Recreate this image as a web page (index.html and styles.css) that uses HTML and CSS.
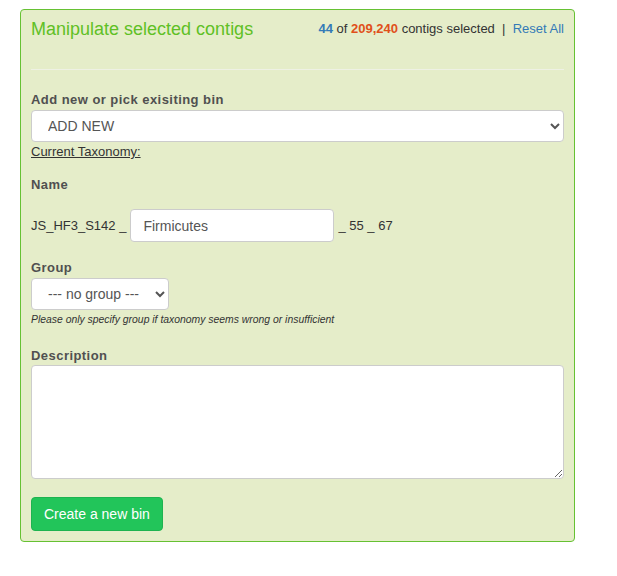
FILE: index.html
```html
<!DOCTYPE html>
<html>
<head>
<meta charset="utf-8">
<link rel="stylesheet" href="styles.css">
</head>
<body>
<div class="panel">
  <div class="panel-head">
    <div class="title">Manipulate selected contigs</div>
    <div class="stats"><b class="sel">44</b> of <b class="total">209,240</b> contigs selected &nbsp;|&nbsp; <a href="#" class="reset">Reset All</a></div>
  </div>
  <div class="rule"></div>
  <label class="lbl first">Add new or pick exisiting bin</label>
  <select class="ctl wide"><option>ADD NEW</option></select>
  <a href="#" class="tax">Current Taxonomy:</a>
  <label class="lbl name-lbl">Name</label>
  <div class="name-row">
    <span>JS_HF3_S142 _</span>
    <input class="ctl name-input" type="text" value="Firmicutes">
    <span>_ 55 _ 67</span>
  </div>
  <label class="lbl group-lbl">Group</label>
  <select class="ctl group"><option>--- no group ---</option></select>
  <p class="help">Please only specify group if taxonomy seems wrong or insufficient</p>
  <label class="lbl desc-lbl">Description</label>
  <textarea class="ctl desc"></textarea>
  <button class="btn">Create a new bin</button>
</div>
</body>
</html>
```

FILE: styles.css
```css
body {
  margin: 0;
  font-family: "Liberation Sans", Arial, sans-serif;
  font-size: 13px;
  color: #333;
  background: #fff;
}
.panel {
  margin: 9px 0 0 20px;
  width: 533px;
  padding: 0 10px 10px 10px;
  border: 1px solid #66c133;
  border-radius: 4px;
  background: #e5edc9;
  display: flex;
  flex-direction: column;
  align-items: flex-start;
}
.panel-head {
  align-self: stretch;
  display: flex;
  justify-content: space-between;
  align-items: flex-start;
  padding-top: 9px;
}
.title {
  font-size: 18px;
  line-height: 20px;
  color: #5fc025;
}
.stats {
  font-size: 13px;
  line-height: 18px;
  padding-top: 1px;
  color: #333;
}
.sel { color: #337ab7; }
.total { color: #e0501a; }
.reset { color: #337ab7; text-decoration: none; }
.rule {
  align-self: stretch;
  height: 1px;
  background: #eef1e4;
  margin-top: 30px;
}
.lbl {
  display: block;
  font-weight: bold;
  color: #505050;
  line-height: 18px;
  letter-spacing: 0.45px;
}
.first { margin-top: 21px; }
.ctl {
  box-sizing: border-box;
  font-family: "Liberation Sans", Arial, sans-serif;
  font-size: 14px;
  color: #555;
  background: #fff;
  border: 1px solid #ccc;
  border-radius: 4px;
}
.wide {
  align-self: stretch;
  height: 32px;
  padding: 0 12px;
  margin-top: 1px;
}
.tax {
  color: #333;
  text-decoration: underline;
  line-height: 18px;
  margin-top: 1px;
}
.name-lbl { margin-top: 15px; }
.name-row {
  display: flex;
  align-items: center;
  gap: 4px;
  margin-top: 15px;
  color: #333;
}
.name-input {
  width: 204px;
  height: 33px;
  padding: 0 12px;
}
.group-lbl { margin-top: 17px; }
.group {
  width: 138px;
  height: 32px;
  padding: 0 12px;
  margin-top: 1px;
}
.help {
  margin: 3px 0 0 0;
  font-size: 10.4px;
  line-height: 13px;
  font-style: italic;
  color: #333;
}
.desc-lbl { margin-top: 21px; }
.desc {
  align-self: stretch;
  height: 114px;
  margin-top: 0;
  resize: vertical;
}
.btn {
  margin-top: 18px;
  height: 34px;
  padding: 0 12px;
  font-family: "Liberation Sans", Arial, sans-serif;
  font-size: 14px;
  color: #fff;
  background: #22c55a;
  border: 1px solid #1eb350;
  border-radius: 4px;
}
```
